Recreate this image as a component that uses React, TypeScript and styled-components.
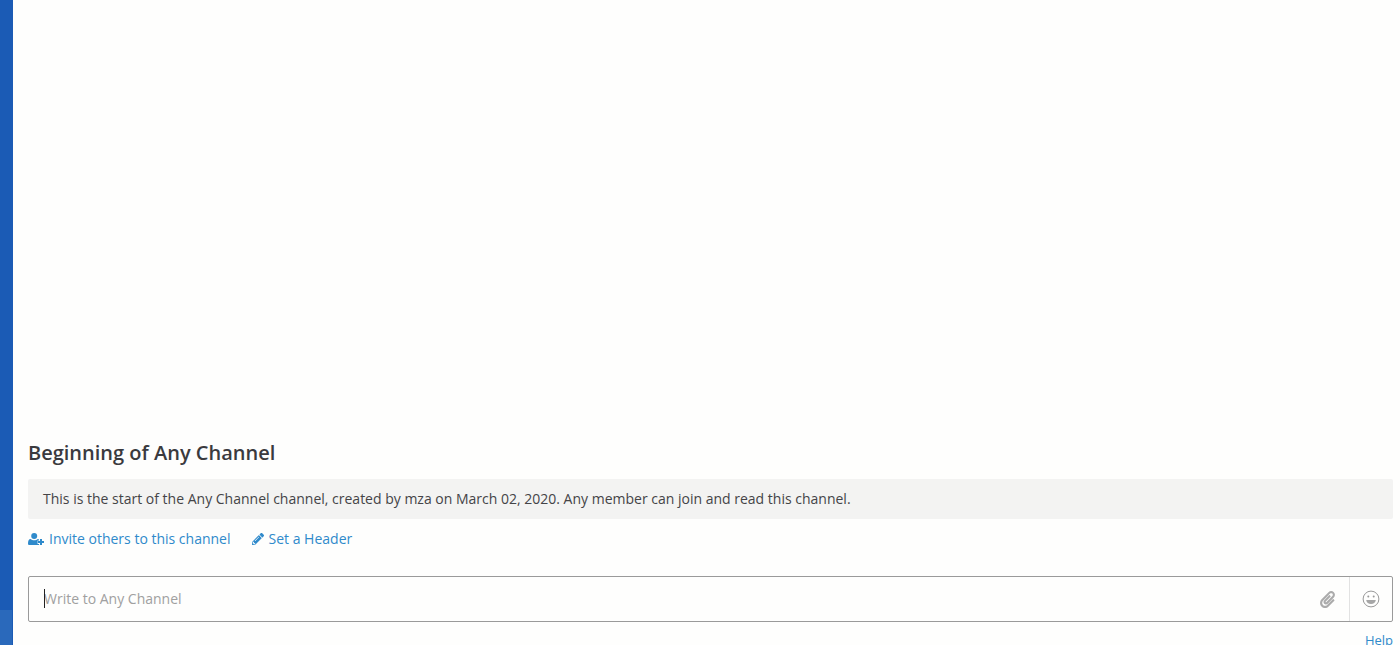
import styled, { createGlobalStyle } from 'styled-components';
import { FaPaperclip, FaPencilAlt } from 'react-icons/fa';

const GlobalStyle = createGlobalStyle`
	html, body {
		margin: 0;
		height: 100%;
		overflow: hidden;
		background: #fefefd;
		font-family: "Open Sans", sans-serif;
	}
`;

const App = () => {
	return (
		<Page>
			<GlobalStyle />
			<Sidebar>
				<SidebarFooter />
			</Sidebar>
			<Main>
				<Title>Beginning of Any Channel</Title>
				<Intro>
					This is the start of the Any Channel channel, created by mza on March
					02, 2020. Any member can join and read this channel.
				</Intro>
				<Actions>
					<ActionLink>
						<svg width="16" height="12" viewBox="0 0 16 12" fill="currentColor">
							<circle cx="6.2" cy="3" r="3" />
							<path d="M0 10.4C0 8 .8 6 2.6 6c.9.8 2.2 1.3 3.6 1.3S8.900 6.800 9.800 6c.5 0 1 .2 1.300.5v1H9.600v3.400h1.500V12H1.500C.6 12 0 11.400 0 10.400z" />
							<path d="M12 6h2v2h2v2h-2v2h-2v-2h-2V8h2z" />
						</svg>
						Invite others to this channel
					</ActionLink>
					<ActionLink>
						<FaPencilAlt size={12} />
						Set a Header
					</ActionLink>
				</Actions>
				<Composer>
					<Input>
						<Caret />
						<Placeholder>Write to Any Channel</Placeholder>
						<AttachIcon>
							<FaPaperclip size={17} />
						</AttachIcon>
					</Input>
					<EmojiButton>
						<svg width="18" height="18" viewBox="0 0 18 18" fill="none">
							<circle cx="9" cy="9" r="7.900" stroke="#999" strokeWidth="1" />
							<circle cx="6.300" cy="6.600" r="1" fill="#999" />
							<circle cx="11.700" cy="6.600" r="1" fill="#999" />
							<path d="M4.200 10h9.600c-.3 2.400-2.300 4-4.800 4s-4.500-1.600-4.800-4z" fill="#a6a6a6" />
						</svg>
					</EmojiButton>
				</Composer>
				<Footer>
					<HelpLink>Help</HelpLink>
				</Footer>
			</Main>
		</Page>
	);
};

const Page = styled.div`
	display: flex;
	height: 645px;
	overflow: hidden;
`;

const Sidebar = styled.div`
	display: flex;
	flex-direction: column;
	justify-content: flex-end;
	flex: 0 0 13px;
	background-color: #1b5bb5;
`;

const SidebarFooter = styled.div`
	width: 12px;
	height: 35px;
	background-color: #2a69bb;
`;

const Main = styled.div`
	display: flex;
	flex: 1;
	flex-direction: column;
	justify-content: flex-end;
	padding: 0 7px 0 15px;
	min-width: 0;
`;

const Title = styled.h2`
	margin: 0 0 13px;
	color: #3a3a3e;
	font-size: 20px;
	font-weight: 600;
	line-height: 27px;
`;

const Intro = styled.div`
	padding: 10px 15px;
	border-radius: 2px;
	background-color: #f3f3f2;
	color: #444447;
	font-size: 14px;
	line-height: 20px;
`;

const Actions = styled.div`
	display: flex;
	gap: 21px;
	margin-top: 10px;
	height: 20px;
`;

const ActionLink = styled.a`
	display: flex;
	align-items: center;
	gap: 5px;
	color: #2f8acb;
	font-size: 14px;
	line-height: 20px;
`;

const Composer = styled.div`
	display: flex;
	height: 46px;
	margin-top: 27px;
	box-sizing: border-box;
	border: 1px solid #9a9a9a;
	border-radius: 2px;
`;

const Input = styled.div`
	position: relative;
	display: flex;
	flex: 1;
	align-items: center;
	padding: 0 13px 0 15px;
`;

const Caret = styled.span`
	position: absolute;
	left: 15px;
	top: 12px;
	width: 1px;
	height: 19px;
	background-color: #222;
`;

const Placeholder = styled.span`
	flex: 1;
	margin-top: -2px;
	color: #a0a0a0;
	font-size: 14px;
`;

const AttachIcon = styled.span`
	display: flex;
	color: #ababab;
`;

const EmojiButton = styled.div`
	display: flex;
	align-items: center;
	justify-content: center;
	flex: 0 0 42px;
	border-left: 1px solid #e2e2e2;
`;

const Footer = styled.div`
	display: flex;
	justify-content: flex-end;
	height: 23px;
	padding-top: 9px;
	box-sizing: border-box;
`;

const HelpLink = styled.a`
	color: #2f8acb;
	font-size: 13px;
	line-height: 18px;
`;

export default App;
